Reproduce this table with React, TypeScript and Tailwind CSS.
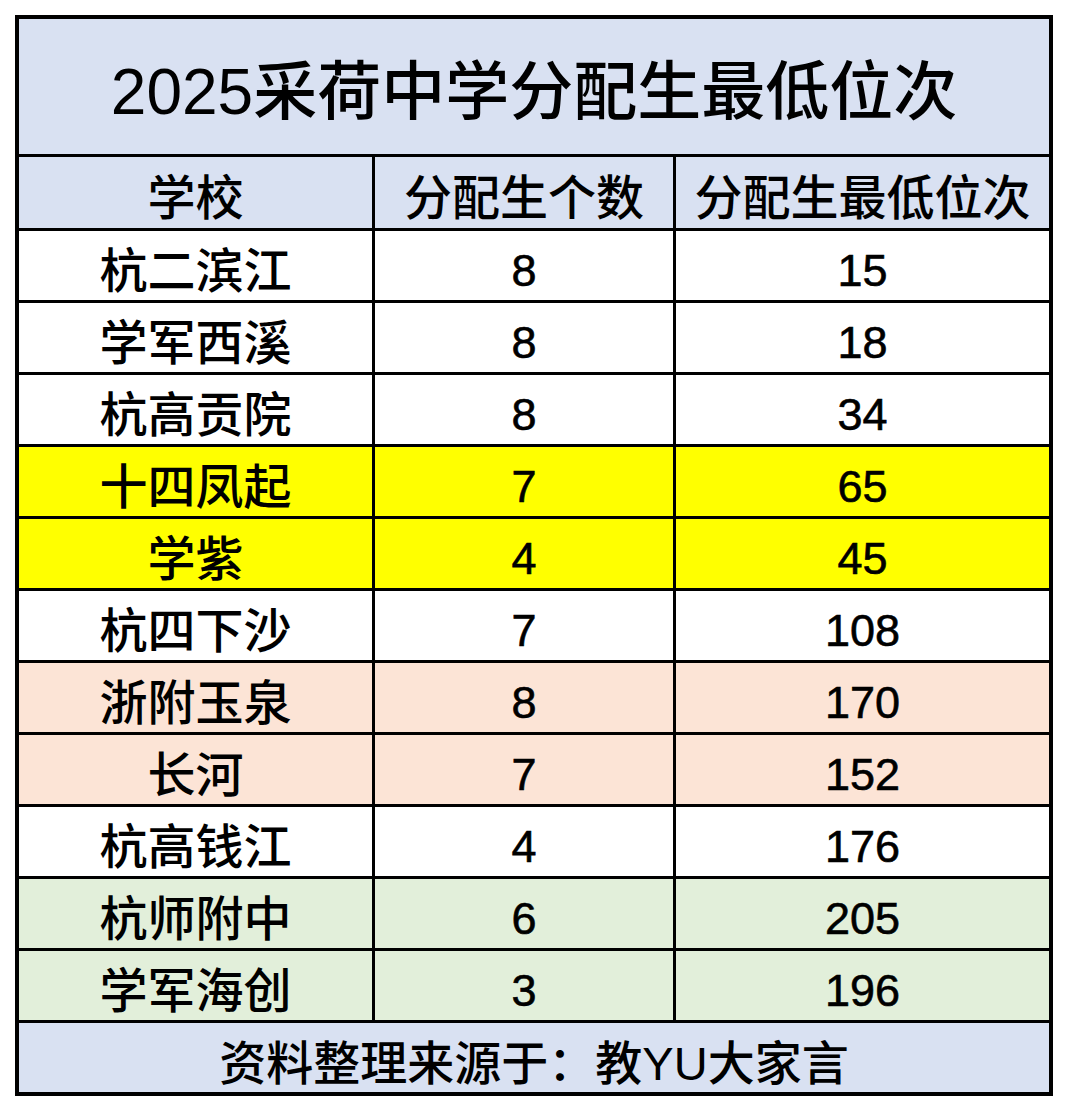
const rows: { school: string; count: string; rank: string; bg: string }[] = [
  { school: '杭二滨江', count: '8', rank: '15', bg: 'bg-white' },
  { school: '学军西溪', count: '8', rank: '18', bg: 'bg-white' },
  { school: '杭高贡院', count: '8', rank: '34', bg: 'bg-white' },
  { school: '十四凤起', count: '7', rank: '65', bg: 'bg-[#ffff00]' },
  { school: '学紫', count: '4', rank: '45', bg: 'bg-[#ffff00]' },
  { school: '杭四下沙', count: '7', rank: '108', bg: 'bg-white' },
  { school: '浙附玉泉', count: '8', rank: '170', bg: 'bg-[#fce4d6]' },
  { school: '长河', count: '7', rank: '152', bg: 'bg-[#fce4d6]' },
  { school: '杭高钱江', count: '4', rank: '176', bg: 'bg-white' },
  { school: '杭师附中', count: '6', rank: '205', bg: 'bg-[#e2efda]' },
  { school: '学军海创', count: '3', rank: '196', bg: 'bg-[#e2efda]' },
];

const font = "font-['Liberation_Sans','Noto_Sans_CJK_SC',sans-serif]";

export default function App() {
  return (
    <div className={`min-h-[1112px] w-[1068px] bg-white pt-[15px] pl-[15px] ${font} font-medium text-black`}>
      <div className="w-[1038px] border-4 border-black">
        {/* title */}
        <div className="flex h-[138px] items-center justify-center border-b-[3px] border-black bg-[#d9e1f2] pt-[10px] text-[64px] leading-none">
          2025采荷中学分配生最低位次
        </div>

        {/* header */}
        <div className="flex h-[74px] border-b-[3px] border-black bg-[#d9e1f2] text-[48px] leading-none">
          <div className="flex w-[356px] items-center justify-center border-r-[3px] border-black pt-[12px]">学校</div>
          <div className="flex w-[301px] items-center justify-center border-r-[3px] border-black pt-[12px]">分配生个数</div>
          <div className="flex flex-1 items-center justify-center pt-[12px]">分配生最低位次</div>
        </div>

        {rows.map((r) => (
          <div key={r.school} className={`flex h-[72px] border-b-[3px] border-black leading-none ${r.bg}`}>
            <div className="flex w-[356px] items-center justify-center border-r-[3px] border-black pt-[12px] text-[48px]">{r.school}</div>
            <div className="flex w-[301px] items-center justify-center border-r-[3px] border-black pt-[10px] text-[45px] [-webkit-text-stroke:0.6px_black]">{r.count}</div>
            <div className="flex flex-1 items-center justify-center pt-[10px] text-[45px] [-webkit-text-stroke:0.6px_black]">{r.rank}</div>
          </div>
        ))}

        {/* footer */}
        <div className="flex h-[69px] items-center justify-center bg-[#d9e1f2] pt-[12px] text-[47px] leading-none">
          资料整理来源于：教YU大家言
        </div>
      </div>
    </div>
  );
}
